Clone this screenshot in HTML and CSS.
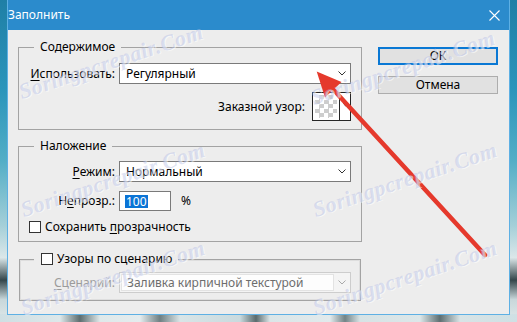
FILE: index.html
```html
<!DOCTYPE html>
<html lang="ru">
<head>
<meta charset="utf-8">
<title>Заполнить</title>
<link rel="stylesheet" href="styles.css">
</head>
<body>
<div class="window">
  <div class="titlebar">
    <span class="title">Заполнить</span>
    <svg class="close" width="11" height="11" viewBox="0 0 11 11"><path d="M0.5 0.5L10.5 10.5M10.5 0.5L0.5 10.5" stroke="#fff" stroke-width="1.1" fill="none"/></svg>
  </div>
  <div class="client">
    <div class="groups">
      <section class="group g1">
        <div class="legend">Содержимое</div>
        <div class="row r1">
          <label class="lbl"><u>И</u>спользовать:</label>
          <div class="select"><span class="val">Регулярный</span><svg class="chev" width="8" height="5" viewBox="0 0 8 5"><path d="M0.5 0.5L4 4L7.5 0.5" stroke="#333" fill="none"/></svg></div>
        </div>
        <div class="row r-pattern">
          <span class="lbl-inline">Заказной узор:</span>
          <div class="swatch"><div class="checker"></div><div class="swatch-drop"><svg width="5" height="4" viewBox="0 0 5 4"><path d="M0 0H5L2.5 3.5Z" fill="#111"/></svg></div></div>
        </div>
      </section>

      <section class="group g2">
        <div class="legend">Наложение</div>
        <div class="row r1">
          <label class="lbl"><u>Р</u>ежим:</label>
          <div class="select"><span class="val">Нормальный</span><svg class="chev" width="8" height="5" viewBox="0 0 8 5"><path d="M0.5 0.5L4 4L7.5 0.5" stroke="#333" fill="none"/></svg></div>
        </div>
        <div class="row r2">
          <label class="lbl">Н<u>е</u>прозр.:</label>
          <div class="input"><span class="sel">100</span></div>
          <span class="pct">%</span>
        </div>
        <div class="row r3">
          <span class="checkbox"></span>
          <span class="cb-text">Сохранить <u>п</u>розрачность</span>
        </div>
      </section>

      <section class="group g3">
        <div class="legend legend-cb"><span class="checkbox"></span><span class="cb-text">Узоры по сценарию</span></div>
        <div class="row r1">
          <label class="lbl disabled"><u>С</u>ценарий:</label>
          <div class="select disabled"><span class="field">Заливка кирпичной текстурой</span><svg class="chev" width="8" height="5" viewBox="0 0 8 5"><path d="M0.5 0.5L4 4L7.5 0.5" stroke="#a9a9a9" fill="none"/></svg></div>
        </div>
      </section>
    </div>
    <div class="buttons">
      <div class="btn btn-ok">ОК</div>
      <div class="btn btn-cancel">Отмена</div>
    </div>
  </div>
</div>

<svg class="arrow" width="517" height="322" viewBox="0 0 517 322">
  <line x1="485" y1="255" x2="331" y2="87" stroke="#e5392c" stroke-width="4.5" stroke-linecap="round"/>
  <polygon points="316.7,71.5 341.5,82 325,97.5" fill="#e5392c"/>
</svg>

<div class="watermarks">
  <span class="wm wm1">Soringpcrepair.Com</span>
  <span class="wm wm2">Soringpcrepair.Com</span>
  <span class="wm wm3">Soringpcrepair.Com</span>
  <span class="wm wm4">Soringpcrepair.Com</span>
  <span class="wm wm5">Soringpcrepair.Com</span>
  <span class="wm wm6">Soringpcrepair.Com</span>
</div>
</body>
</html>
```
FILE: styles.css
```css
* { box-sizing: border-box; }
html, body { margin: 0; padding: 0; }
html { overflow: hidden; }
body {
  width: 517px;
  height: 322px;
  overflow: hidden;
  position: relative;
  font-family: "Noto Sans", "Open Sans", sans-serif;
  font-size: 12px;
  line-height: 16px;
  color: #000;
  background:
    linear-gradient(90deg, #cfdfe3 0, #dde8ea 60px, #5d6e70 80px, #dfe9ea 100px, #e4ecee 140px, #6f8083 160px, #d9e5e7 180px, #c9dade 240px, #5a6b6d 256px, #dbe6e8 270px, #e1eaec 330px, #728487 345px, #d7e3e5 360px, #dce7e9 420px, #5e6f72 440px, #d8e4e6 460px, #cfe0e4 517px) left bottom / 100% 8px no-repeat,
    linear-gradient(to bottom, #1f7fa6 0%, #2b95bb 28%, #53aec6 50%, #a4cfd8 70%, #dbe7e9 80%, #34464a 87%, #c8d7da 93%, #e0e9ea 100%);
}
u { text-decoration: underline; text-underline-offset: 2px; }

.window {
  margin-left: 7px;
  width: 503px;
  height: 315px;
  border: 1px solid #5eb0e4;
  border-top: none;
  background: #ededed;
  display: flex;
  flex-direction: column;
}
.titlebar {
  height: 30px;
  flex: none;
  background: #2b8bcc;
  color: #fff;
  display: flex;
  align-items: center;
  justify-content: space-between;
  padding: 0 9px 0 0;
}
.title { line-height: 16px; }
.close { display: block; }

.client {
  display: flex;
  padding: 17px 0 0 10px;
}
.groups { width: 344px; }

.group {
  border: 1px solid #a3a3a3;
}
.legend {
  width: fit-content;
  height: 16px;
  margin: -9px 0 0 15px;
  padding: 0 6px;
  background: #ededed;
  line-height: 16px;
}
.row {
  display: flex;
  align-items: center;
}
.lbl {
  width: 96px;
  text-align: right;
  flex: none;
}
.lbl.disabled { color: #9b9b9b; width: 95px; }

.select {
  margin-left: 4px;
  width: 232px;
  height: 21px;
  border: 1px solid #7a7a7a;
  background: #fff;
  display: flex;
  align-items: center;
  justify-content: space-between;
  padding: 0 4px 0 6px;
}
.chev { display: block; flex: none; }

.g1 { padding-bottom: 8px; }
.g1 .r1 { margin-top: 8px; }
.r-pattern {
  margin-top: 8px;
  justify-content: flex-end;
  padding-right: 10px;
}
.lbl-inline { margin-right: 7px; }
.swatch {
  width: 39px;
  height: 29px;
  border: 1px solid #262626;
  background: #fff;
  display: flex;
}
.checker {
  width: 22px;
  margin: 2px;
  background-color: #fff;
  background-image: conic-gradient(#cdcdcd 25%, #fff 0 50%, #cdcdcd 0 75%, #fff 0);
  background-size: 9px 9px;
}
.swatch-drop {
  flex: 1;
  border-left: 1px solid #262626;
  display: flex;
  justify-content: center;
  padding-top: 10px;
}
.swatch-drop svg { display: block; }

.g2 { margin-top: 16px; padding-bottom: 6px; }
.g2 .r1 { margin-top: 7px; }
.r2 { margin-top: 9px; }
.input {
  margin-left: 4px;
  width: 52px;
  height: 20px;
  border: 1px solid #7a7a7a;
  background: #fff;
  padding-left: 5px;
  display: flex;
  align-items: center;
}
.sel {
  background: #0a74d6;
  color: #fff;
  line-height: 13px;
  padding: 0 1px;
}
.pct { margin-left: 10px; }
.r3 { margin-top: 8px; padding-left: 10px; height: 16px; }
.checkbox {
  width: 12px;
  height: 12px;
  border: 1px solid #333;
  background: #fff;
  flex: none;
  display: block;
}
.cb-text { margin-left: 4px; }

.g3 {
  margin: 17px 1px 0;
  padding-bottom: 7px;
  box-shadow: inset 0 0 0 1px #dedede;
}
.legend-cb {
  display: flex;
  align-items: center;
  margin-left: 14px;
  padding: 0 6px 0 7px;
}
.g3 .r1 { margin-top: 5px; }
.select.disabled {
  border-color: #cdcdcd;
  background: #f4f4f4;
  padding: 1px 4px 1px 1px;
}
.field {
  flex: none;
  width: 213px;
  height: 100%;
  border: 1px solid #e3e3e3;
  background: #fdfdfd;
  color: #6d6d6d;
  padding-left: 5px;
  display: flex;
  align-items: center;
}

.buttons {
  margin-left: 16px;
  width: 120px;
}
.btn {
  width: 120px;
  height: 18px;
  background: #e1e1e1;
  border: 1px solid #adadad;
  display: flex;
  align-items: center;
  justify-content: center;
}
.btn-ok { border: 2px solid #0a78d4; }
.btn-cancel { margin-top: 11px; }

.arrow {
  position: absolute;
  left: 0;
  top: 0;
  pointer-events: none;
}

.watermarks {
  position: absolute;
  inset: 0;
  overflow: hidden;
  pointer-events: none;
}
.wm {
  position: absolute;
  font-family: "Liberation Serif", serif;
  font-style: italic;
  font-weight: bold;
  font-size: 22px;
  letter-spacing: 0.5px;
  white-space: nowrap;
  color: rgba(178, 188, 228, 0.42);
  text-shadow: 1px 1px 0 rgba(255,255,255,0.55);
  transform: translate(-50%, -50%) rotate(-18.5deg);
}
.wm1 { left: 111px; top: 62px; }
.wm2 { left: 403px; top: 68px; }
.wm3 { left: 113px; top: 180px; }
.wm4 { left: 405px; top: 180px; }
.wm5 { left: 113px; top: 278px; }
.wm6 { left: 405px; top: 278px; }
```
